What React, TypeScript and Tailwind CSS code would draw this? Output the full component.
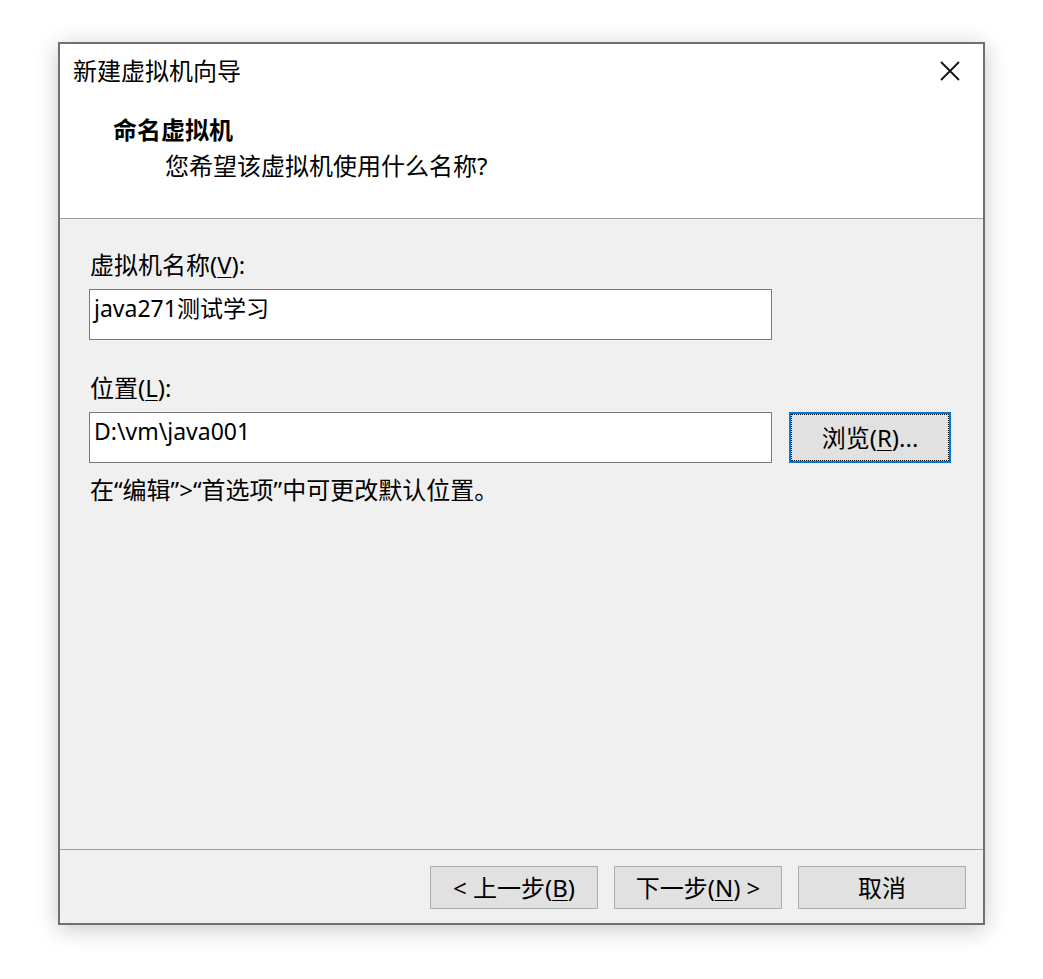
import React from "react";

const Acc = ({ c }: { c: string }) => <span className="underline underline-offset-[3px] decoration-1">{c}</span>;

export default function App() {
  return (
    <div className="w-[1043px] h-[979px] bg-white pt-[42px] pl-[58px] font-['Noto_Sans','Noto_Sans_CJK_SC',sans-serif] text-black">
      <div className="w-[927px] h-[883px] border-2 border-[#707070] bg-[#f0f0f0] flex flex-col shadow-[0_4px_22px_rgba(0,0,0,0.22)]">
        {/* header */}
        <div className="h-[175px] bg-white border-b border-[#a0a0a0] flex flex-col">
          <div className="mt-[11px] h-[32px] flex items-center justify-between pl-[13px] pr-[23px]">
            <span className="text-[24px] leading-[32px]">新建虚拟机向导</span>
            <svg width="20" height="20" viewBox="0 0 20 20" className="block">
              <path d="M1 1 L19 19 M19 1 L1 19" stroke="#111" strokeWidth="1.8" fill="none" />
            </svg>
          </div>
          <div className="mt-[27px] pl-[53px] text-[24px] leading-[32px] font-bold">命名虚拟机</div>
          <div className="mt-[4px] pl-[105px] text-[24px] leading-[32px]">您希望该虚拟机使用什么名称?</div>
        </div>
        {/* content */}
        <div className="flex-1 flex flex-col pl-[29px] text-[24px]">
          <div className="mt-[30px] h-[32px] leading-[32px] pl-[1px]">
            虚拟机名称(<Acc c="V" />):
          </div>
          <div className="mt-[8px] w-[683px] h-[51px] border border-[#7a7a7a] bg-white pl-[4px] pt-[2px] leading-[32px] text-[23px]">
            java271测试学习
          </div>
          <div className="mt-[32px] h-[32px] leading-[32px] pl-[1px]">
            位置(<Acc c="L" />):
          </div>
          <div className="mt-[8px] flex gap-[17px]">
            <div className="w-[683px] h-[51px] border border-[#7a7a7a] bg-white pl-[4px] pt-[2px] leading-[32px] text-[23px]">
              D:\vm\java001
            </div>
            <div className="w-[162px] h-[51px] border-2 border-[#0078d7] bg-[#e1e1e1]">
              <div className="w-full h-full border border-dotted border-black flex items-center justify-center leading-[32px]">
                浏览(<Acc c="R" />)...
              </div>
            </div>
          </div>
          <div className="mt-[11px] h-[32px] leading-[32px] pl-[1px]">
            在“编辑”&gt;“首选项”中可更改默认位置。
          </div>
        </div>
        {/* footer */}
        <div className="border-t border-[#a0a0a0] pt-[16px] pb-[14px] pr-[17px] flex justify-end gap-[16px] text-[24px]">
          <div className="w-[168px] h-[43px] bg-[#e1e1e1] border border-[#adadad] flex items-center justify-center leading-[32px]">
            &lt; 上一步(<Acc c="B" />)
          </div>
          <div className="w-[168px] h-[43px] bg-[#e1e1e1] border border-[#adadad] flex items-center justify-center leading-[32px]">
            下一步(<Acc c="N" />) &gt;
          </div>
          <div className="w-[168px] h-[43px] bg-[#e1e1e1] border border-[#adadad] flex items-center justify-center leading-[32px]">
            取消
          </div>
        </div>
      </div>
    </div>
  );
}
